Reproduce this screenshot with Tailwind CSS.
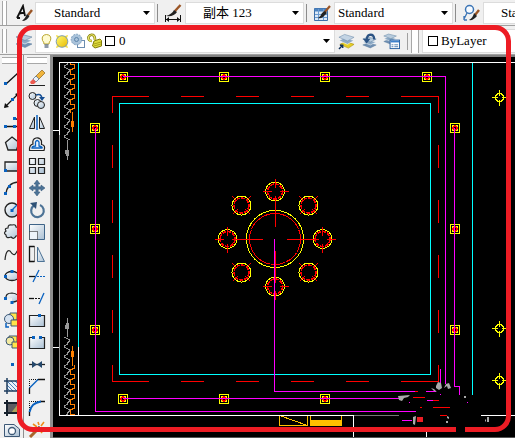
<!DOCTYPE html>
<html lang="zh-CN">
<head>
    <meta charset="UTF-8">
    <meta name="viewport" content="width=device-width, initial-scale=1.0">
    <title>CAD</title>
    <script src="https://cdn.jsdelivr.net/npm/@tailwindcss/browser@4"></script>
</head>
<body class="relative flex h-screen flex-col overflow-hidden bg-[#f0f0f0] font-['Liberation_Serif','Noto_Sans_CJK_SC',serif] text-[13px] text-black">

    <!-- shared gradients and glyphs -->
    <svg class="absolute h-0 w-0" aria-hidden="true">
        <defs>
            <linearGradient id="steel" x1="0" y1="0" x2="1" y2="1">
                <stop offset="0" stop-color="#fff"/><stop offset="1" stop-color="#a9bfd3"/>
            </linearGradient>
            <linearGradient id="glow" x1="0" y1="0" x2="1" y2="1">
                <stop offset="0" stop-color="#fffb70"/><stop offset="1" stop-color="#e8b800"/>
            </linearGradient>
            <symbol id="brush" viewBox="0 0 18 18">
                <path d="M17 2 L11 9" stroke="#9a5526" stroke-width="2.2"/>
                <path d="M12 7 L14 9 L10 13 Q7 15 5 14 Q8 12 9 9 Z" fill="#222"/>
            </symbol>
            <symbol id="sheets" viewBox="0 0 18 18">
                <path d="M1 12 L7 9.500 L17 12 L10 15.500 Z" fill="#6f8fb2" stroke="#56789b" stroke-width=".5"/>
                <path d="M1 8.500 L7 6 L17 8.500 L10 12 Z" fill="#8ba8c4" stroke="#fff" stroke-width=".6"/>
                <path d="M1 5 L7 2.500 L17 5 L10 8.500 Z" fill="#b7cbdd" stroke="#5f81a0" stroke-width=".6"/>
            </symbol>
        </defs>
    </svg>

    <!-- styles toolbar -->
    <header class="flex h-[26px] shrink-0 items-center border-b border-[#a0a0a0] pl-0.5">
        <span class="h-6 w-[5px] shrink-0 border-x border-[#a8a8a8] bg-white"></span>
        <button class="ml-1.5 flex w-[22px] shrink-0 justify-center" aria-label="Text style">
            <svg class="size-[18px]" viewBox="0 0 18 18" fill="none">
                <path d="M2 14 L8 2 L10 12 M4 9.500 L10 8.500 M2 14 H5" stroke="#111" stroke-width="1.800"/>
                <path d="M17 6 L13 11" stroke="#9a5526" stroke-width="2.400"/>
                <path d="M12 10 L14.500 12 Q12 17 7 17 Q10 15 12 10 Z" fill="#222"/>
            </svg>
        </button>
        <label class="flex h-[22px] w-[120px] shrink-0 items-center border border-[#dcdcdc] bg-white pr-1 pl-[18px]">
            <select class="min-w-0 flex-1 appearance-none bg-transparent outline-none" aria-label="Text style name"><option>Standard</option></select>
            <svg class="h-1 w-[7px]" viewBox="0 0 7 4"><path d="M0 0 H7 L3.500 4 Z"/></svg>
        </label>
        <span class="mx-0.5 h-[18px] w-px shrink-0 bg-[#8c8c8c]"></span>
        <button class="flex w-[25px] shrink-0 justify-center" aria-label="Dimension style">
            <svg class="size-[18px]" viewBox="0 0 18 18" fill="none">
                <path d="M1.500 11 V18 M16.500 11 V18 M2 15.500 H16" stroke="#111"/>
                <path d="M2 15.500 L5 13 V18 Z M16 15.500 L13 13 V18 Z" fill="#111"/>
                <path d="M16.500 1 L11 7" stroke="#9a5526" stroke-width="2.400"/>
                <path d="M10 6 L13 8 Q10 13 2 12 Q8 10 10 6 Z" fill="#222"/>
            </svg>
        </button>
        <label class="flex h-[22px] w-[119px] shrink-0 items-center border border-[#dcdcdc] bg-white pr-1 pl-[17px]">
            <select class="min-w-0 flex-1 appearance-none bg-transparent outline-none" aria-label="Dimension style name"><option>副本 123</option></select>
            <svg class="h-1 w-[7px]" viewBox="0 0 7 4"><path d="M0 0 H7 L3.500 4 Z"/></svg>
        </label>
        <span class="mx-0.5 h-[18px] w-px shrink-0 bg-[#8c8c8c]"></span>
        <button class="flex w-[25px] shrink-0 justify-center" aria-label="Table style">
            <svg class="size-[18px]" viewBox="0 0 18 18" fill="none">
                <path d="M1.500 4.500 H14.500 V16.500 H1.500 Z" fill="#dce9f7" stroke="#3d6ea8"/>
                <path d="M1.500 4.500 H14.500 V7.500 H1.500 Z" fill="#4b83c0"/>
                <path d="M2 10.500 H14 M2 13.500 H14 M5.500 5 V16 M10.500 5 V16" stroke="#6b9bd0"/>
                <use href="#brush" width="18" height="18"/>
            </svg>
        </button>
        <label class="flex h-[22px] w-[119px] shrink-0 items-center border border-[#dcdcdc] bg-white pr-1 pl-[3px]">
            <select class="min-w-0 flex-1 appearance-none bg-transparent outline-none" aria-label="Table style name"><option>Standard</option></select>
            <svg class="h-1 w-[7px]" viewBox="0 0 7 4"><path d="M0 0 H7 L3.500 4 Z"/></svg>
        </label>
        <span class="mx-0.5 h-[18px] w-px shrink-0 bg-[#8c8c8c]"></span>
        <button class="flex w-[25px] shrink-0 justify-center" aria-label="Multileader style">
            <svg class="size-[18px]" viewBox="0 0 18 18" fill="none">
                <circle cx="7.500" cy="5.500" r="4" fill="#f5faff" stroke="#3b74b5" stroke-width="1.500"/>
                <path d="M5 9 L2 15 M2 16 V12 M2 16 H5" stroke="#3b74b5" stroke-width="1.300"/>
                <path d="M17 6 L13 11" stroke="#9a5526" stroke-width="2.400"/>
                <path d="M12 9 L15 12 Q11 17 7 16 Q11 14 12 9 Z" fill="#222"/>
            </svg>
        </button>
        <label class="flex h-[22px] min-w-0 flex-1 items-center overflow-hidden border border-r-0 border-[#dcdcdc] bg-white pl-[17px]">
            <select class="shrink-0 appearance-none bg-transparent outline-none" aria-label="Multileader style name"><option>Standard</option></select>
        </label>
    </header>

    <!-- layers toolbar -->
    <div class="flex h-[29px] shrink-0 items-center border-b border-[#a0a0a0] pt-0.5 pl-0.5">
        <span class="h-6 w-[5px] shrink-0 border-x border-[#a8a8a8] bg-white"></span>
        <button class="ml-1.5 flex w-[22px] shrink-0 justify-center" aria-label="Layer properties">
            <svg class="size-[18px]" viewBox="0 0 18 18"><use href="#sheets"/></svg>
        </button>
        <div class="flex h-6 min-w-0 flex-1 items-center border border-[#dcdcdc] bg-white pr-1 pl-[3px]">
            <svg class="h-4 w-[15px] shrink-0" viewBox="0 0 15 16" fill="none">
                <path d="M5 11 Q5 9 3.500 7.500 Q2 2 7.500 1.500 Q13 2 11.500 7.500 Q10 9 10 11 Z" fill="#fffbd0" stroke="#b9a52e"/>
                <path d="M5.500 12 H9.500 M5.500 14 H9.500" stroke="#68788c" stroke-width="1.500"/>
            </svg>
            <svg class="h-4 w-4 shrink-0" viewBox="0 0 16 16">
                <path d="M2 2 L5 3 H11 L14 2 L13 5 V12 L14 15 L11 14 H5 L2 15 L3 12 V5 Z" fill="#f4dc3a"/>
                <circle cx="8" cy="8.500" r="5.800" fill="url(#glow)" stroke="#7d9ab0"/>
            </svg>
            <svg class="h-4 w-[17px] shrink-0" viewBox="0 0 17 16" fill="none">
                <rect x="7.500" y="7.500" width="7" height="7" fill="#fff" stroke="#6c8db0"/>
                <circle cx="6.500" cy="6.500" r="5.300" fill="#a9c2da" stroke="#7b9dbd" stroke-dasharray="2 1"/>
                <circle cx="6.500" cy="6.500" r="2" stroke="#5e85ab"/>
            </svg>
            <svg class="h-4 w-4 shrink-0" viewBox="0 0 16 16" fill="none">
                <path d="M5 8 Q1 8 1.500 4 Q3 1 6 2 Q8 3 8 7" stroke="#827c0b" stroke-width="2.600"/>
                <path d="M5 8 Q1 8 1.500 4 Q3 1 6 2 Q8 3 8 7" stroke="#ece868" stroke-width="1.200"/>
                <path d="M7 8 L13 6 L14.500 7.500 V13 L8 15 L5.500 13 Z" fill="#dedb3d" stroke="#827c0b"/>
                <path d="M7 11 L14 9 M7 13 L14 11" stroke="#aaa31a"/>
            </svg>
            <span class="ml-0.5 size-2.5 shrink-0 border border-black bg-white"></span>
            <select class="ml-1 min-w-0 flex-1 appearance-none bg-transparent outline-none" aria-label="Current layer"><option>0</option></select>
            <svg class="h-1 w-[7px] shrink-0" viewBox="0 0 7 4"><path d="M0 0 H7 L3.500 4 Z"/></svg>
        </div>
        <div class="flex w-[73px] shrink-0 items-center justify-between border-r border-[#a0a0a0] pr-[7px] pl-[3px]">
            <button aria-label="Make object's layer current">
                <svg class="size-[17px]" viewBox="0 0 18 18">
                    <path d="M2 12 L8 9 L17 12 L11 16 Z" fill="#e6cf25" stroke="#a48b0d" stroke-width=".6"/>
                    <path d="M1 8 L7 5 L17 8 L10 12 Z" fill="#8faac4" stroke="#fff" stroke-width=".6"/>
                    <path d="M1 4.500 L7 1.500 L17 4.500 L10 8.500 Z" fill="#c3d4e4" stroke="#6f8eab" stroke-width=".6"/>
                    <path d="M1 17 L5 13 M2 13 H5 V16" stroke="#12335c" stroke-width="1.500" fill="none"/>
                </svg>
            </button>
            <button aria-label="Layer previous">
                <svg class="size-[17px]" viewBox="0 0 18 18" fill="none">
                    <use href="#sheets" y="2" width="18" height="16"/>
                    <path d="M14 7 Q14 1 9 2 Q6 3 6 8" stroke="#2b5384" stroke-width="2.400"/>
                    <path d="M2 6 L10 6 L6 11 Z" fill="#2b5384"/>
                </svg>
            </button>
            <button aria-label="Layer states manager">
                <svg class="size-[17px]" viewBox="0 0 18 18">
                    <use href="#sheets" y="-1" width="15" height="15"/>
                    <rect x="7.500" y="7.500" width="10" height="9" fill="#fff" stroke="#2760a0"/>
                    <path d="M8 8 H17 V10 H8 Z" fill="#3f82cc"/>
                    <path d="M9 12.500 H11 M12 12.500 H16 M9 14.500 H11 M12 14.500 H16" stroke="#527fae"/>
                </svg>
            </button>
        </div>
        <span class="mx-[3px] h-6 w-2 shrink-0 border-x border-[#a8a8a8] bg-white"></span>
        <label class="flex h-6 w-[93px] shrink-0 items-center border border-r-0 border-[#dcdcdc] bg-white pl-[5px]">
            <span class="size-2.5 shrink-0 border border-black bg-white"></span>
            <select class="ml-[3px] min-w-0 flex-1 appearance-none bg-transparent outline-none" aria-label="Color"><option>ByLayer</option></select>
        </label>
    </div>

    <main class="flex min-h-0 flex-1">
        <!-- draw toolbar -->
        <nav class="flex w-6 shrink-0 flex-col items-center overflow-hidden border-r border-[#8f8f8f] pt-0.5" aria-label="Draw">
            <span class="mb-[3px] h-[7px] w-5 shrink-0 border-y border-[#a8a8a8] bg-white"></span>
            <button class="flex h-[22px] shrink-0 items-center" aria-label="Line">
                <svg class="size-[18px]" viewBox="0 0 18 18"><path d="M3 15 L15 4" stroke="#111" stroke-width="1.300"/><path d="M1 13 H4 V16 H1 Z M14 2 H17 V5 H14 Z" fill="#0a62c0"/></svg>
            </button>
            <button class="flex h-[22px] shrink-0 items-center" aria-label="Construction line">
                <svg class="size-[18px]" viewBox="0 0 18 18"><path d="M2 16 L16 2" stroke="#111" stroke-width="1.300"/><path d="M1 17 L2 12 L6 16 Z M17 1 L12 3 L15 6 Z" fill="#111"/><path d="M8 7 H11 V10 H8 Z" fill="#0a62c0"/></svg>
            </button>
            <button class="flex h-[22px] shrink-0 items-center" aria-label="Polyline">
                <svg class="size-[18px]" viewBox="0 0 18 18" fill="none"><path d="M2 13.500 H16 M12 6 H13 Q17 6 17 10" stroke="#111" stroke-width="1.300"/><path d="M1 12 H4 V15 H1 Z M10 12 H13 V15 H10 Z M10 4 H13 V7 H10 Z" fill="#0a62c0"/></svg>
            </button>
            <button class="flex h-[22px] shrink-0 items-center" aria-label="Polygon">
                <svg class="size-[18px]" viewBox="0 0 18 18"><path d="M9 2 L16 7.500 L13.500 15 H5 L2.500 7.500 Z" fill="url(#steel)" stroke="#222" stroke-width="1.300"/></svg>
            </button>
            <button class="flex h-[22px] shrink-0 items-center" aria-label="Rectangle">
                <svg class="size-[18px]" viewBox="0 0 18 18"><path d="M2 5 H17 V14 H2 Z" fill="url(#steel)" stroke="#222" stroke-width="1.300"/><path d="M1 12 H4 V15 H1 Z M14 3 H17 V6 H14 Z" fill="#0a62c0"/></svg>
            </button>
            <button class="flex h-[22px] shrink-0 items-center" aria-label="Arc">
                <svg class="size-[18px]" viewBox="0 0 18 18" fill="none"><path d="M3 15 Q4 4 15 3" stroke="#222" stroke-width="1.300"/><path d="M1 13 H4 V16 H1 Z M5 6 H8 V9 H5 Z M14 2 H17 V5 H14 Z" fill="#0a62c0"/></svg>
            </button>
            <button class="flex h-[22px] shrink-0 items-center" aria-label="Circle">
                <svg class="size-[18px]" viewBox="0 0 18 18"><circle cx="9" cy="9" r="7" fill="url(#steel)" stroke="#222" stroke-width="1.400"/><path d="M9 9 L14 4" stroke="#0a62c0" stroke-width="1.300"/><path d="M7.500 8 H10.500 V11 H7.500 Z" fill="#0a62c0"/></svg>
            </button>
            <button class="flex h-[22px] shrink-0 items-center" aria-label="Revision cloud">
                <svg class="size-[18px]" viewBox="0 0 18 18"><path d="M5 5 Q5 1 9 2 Q13 1 13 4 Q18 5 16 9 Q17 13 13 13 Q11 17 8 14 Q3 16 3 12 Q0 10 3 8 Q1 5 5 5 Z" fill="url(#steel)" stroke="#222" stroke-width="1.200"/></svg>
            </button>
            <button class="flex h-[22px] shrink-0 items-center" aria-label="Spline">
                <svg class="size-[18px]" viewBox="0 0 18 18" fill="none"><path d="M2 15 Q3 4 7 6 Q11 12 13 8 Q14 5 17 4" stroke="#222" stroke-width="1.200"/></svg>
            </button>
            <button class="flex h-[22px] shrink-0 items-center" aria-label="Ellipse">
                <svg class="size-[18px]" viewBox="0 0 18 18"><ellipse cx="9" cy="9" rx="7" ry="4.500" fill="url(#steel)" stroke="#222" stroke-width="1.300"/><path d="M1 8 H4 V11 H1 Z M7.500 3 H10.500 V6 H7.500 Z M14 8 H17 V11 H14 Z" fill="#0a62c0"/></svg>
            </button>
            <button class="flex h-[22px] shrink-0 items-center" aria-label="Ellipse arc">
                <svg class="size-[18px]" viewBox="0 0 18 18"><path d="M3 10 Q2 4 9 4 Q16 5 16 9 Q15 13 9 13 V9 Z" fill="url(#steel)"/><path d="M3 10 Q2 4 9 4 Q16 5 16 9 Q15 13 9 13" fill="none" stroke="#222" stroke-width="1.200"/><path d="M1 8 H4 V11 H1 Z M7.500 12 H10.500 V15 H7.500 Z" fill="#0a62c0"/></svg>
            </button>
            <button class="flex h-[22px] shrink-0 items-center" aria-label="Insert block">
                <svg class="size-[18px]" viewBox="0 0 18 18"><path d="M7 2 H14 V9 H7 Z" fill="#ffe34a" stroke="#3c5876"/><circle cx="6" cy="8" r="4.500" fill="#d5e2f0" stroke="#3c5876"/><path d="M8 9 H15 V15 H8 Z" fill="#ffe34a" stroke="#3c5876"/><path d="M3 12 V16 H6" fill="none" stroke="#0a62c0" stroke-width="1.500"/><path d="M17 14 V17 H14 Z"/></svg>
            </button>
            <button class="flex h-[22px] shrink-0 items-center" aria-label="Make block">
                <svg class="size-[18px]" viewBox="0 0 18 18"><path d="M6 3 H14 V10 H6 Z" fill="#ffe34a" stroke="#3c5876"/><circle cx="7" cy="8" r="4" fill="#f3eaa0" stroke="#3c5876"/><path d="M9 9 H16 V15 H9 Z" fill="#ffe34a" stroke="#3c5876"/></svg>
            </button>
            <button class="flex h-[22px] shrink-0 items-center" aria-label="Point">
                <svg class="size-[18px]" viewBox="0 0 18 18"><path d="M8 8 H11 V11 H8 Z" fill="#0a62c0"/></svg>
            </button>
            <button class="flex h-[22px] shrink-0 items-center" aria-label="Hatch">
                <svg class="size-[18px]" viewBox="0 0 18 18"><path d="M4 4 H15 V14 H4 Z" fill="#e9f1fa"/><path d="M4 4 L14 14 M8 4 L15 11 M12 4 L15 7 M4 8 L10 14 M4 11 L7 14" stroke="#4b80b8"/><path d="M4 1 V17 M15 1 V17 M1 4 H18 M1 14 H18" stroke="#1e3c5e" stroke-width="1.500"/></svg>
            </button>
            <button class="flex h-[22px] shrink-0 items-center" aria-label="Gradient">
                <svg class="size-[18px]" viewBox="0 0 18 18"><path d="M4 4 H15 V14 H4 Z" fill="#5d5d62"/><path d="M8 14 L15 5 V14 Z" fill="#aaa35c"/><path d="M4 1 V17 M15 1 V17 M1 4 H18 M1 14 H18" stroke="#16202c" stroke-width="2"/></svg>
            </button>
            <button class="flex h-[22px] shrink-0 items-center" aria-label="Region">
                <svg class="size-[18px]" viewBox="0 0 18 18"><path d="M1.500 3.500 H11 L16.500 8 V15.500 H1.500 Z" fill="url(#steel)" stroke="#3c5876"/><circle cx="9" cy="10" r="3.500" fill="#fff" stroke="#3c5876" stroke-width="1.300"/></svg>
            </button>
        </nav>

        <!-- modify toolbar -->
        <nav class="flex w-[29px] shrink-0 flex-col items-center overflow-hidden border-r-3 border-[#8f8f8f] pt-0.5" aria-label="Modify">
            <span class="mb-[3px] h-[7px] w-5 shrink-0 border-y border-[#a8a8a8] bg-white"></span>
            <button class="flex h-[22px] shrink-0 items-center" aria-label="Erase">
                <svg class="size-[18px]" viewBox="0 0 18 18"><path d="M1 16.500 H17" stroke="#222"/><path d="M7 8 L14 1 L17 4 L10 11 Z" fill="#f0b43c" stroke="#8a6420" stroke-width=".7"/><path d="M5 10 L8 7 L11 10 L8 13 Z" fill="#e9f1fa" stroke="#4a6888" stroke-width=".7"/><path d="M2 13 L5 10 L8 13 L6 15 H3 Z" fill="#ed5a50"/></svg>
            </button>
            <button class="flex h-[22px] shrink-0 items-center" aria-label="Copy">
                <svg class="size-[18px]" viewBox="0 0 18 18" fill="none"><circle cx="4.500" cy="5" r="3.500" fill="url(#steel)" stroke="#222"/><circle cx="9.500" cy="12" r="3.500" fill="url(#steel)" stroke="#222"/><circle cx="13" cy="14" r="3.500" fill="url(#steel)" stroke="#222"/><path d="M8 4 Q13 2 14 7" stroke="#174f94" stroke-width="1.500"/><path d="M11 6 H17 L14 10 Z" fill="#174f94"/></svg>
            </button>
            <button class="flex h-[22px] shrink-0 items-center" aria-label="Mirror">
                <svg class="size-[18px]" viewBox="0 0 18 18"><path d="M6.500 4 V15.500 H1.500 Z" fill="url(#steel)" stroke="#222"/><path d="M11.500 4 V15.500 H16.500 Z" fill="url(#steel)" stroke="#222"/><path d="M9 2 V17" stroke="#0a62c0" stroke-width="1.500"/></svg>
            </button>
            <button class="flex h-[22px] shrink-0 items-center" aria-label="Offset">
                <svg class="size-[18px]" viewBox="0 0 18 18" fill="none"><path d="M2 15.500 H16 Q18 10 13.500 9.500 V6 Q12 2 8 3 Q4 4 5 9 Q1 10 1.500 15.500 Z" stroke="#222" stroke-width="1.200"/><path d="M4 13 H14 Q15 12 11 11 V7 Q9 4 7.500 7 V11 Q4 11 4 13 Z" fill="#e9f3ff" stroke="#0a62c0" stroke-width="1.300"/></svg>
            </button>
            <button class="flex h-[22px] shrink-0 items-center" aria-label="Array">
                <svg class="size-[18px]" viewBox="0 0 18 18"><path d="M1.500 1.500 H7.500 V7.500 H1.500 Z M10.500 1.500 H16.500 V7.500 H10.500 Z M1.500 10.500 H7.500 V16.500 H1.500 Z M10.500 10.500 H16.500 V16.500 H10.500 Z" fill="url(#steel)" stroke="#222" stroke-width="1.200"/></svg>
            </button>
            <button class="flex h-[22px] shrink-0 items-center" aria-label="Move">
                <svg class="size-[18px]" viewBox="0 0 18 18"><path d="M9 1 L12 5 H10.200 V7.800 H13 V6 L17 9 L13 12 V10.200 H10.200 V13 H12 L9 17 L6 13 H7.800 V10.200 H5 V12 L1 9 L5 6 V7.800 H7.800 V5 H6 Z" fill="#4d7396" stroke="#2f5276" stroke-width=".5"/></svg>
            </button>
            <button class="flex h-[22px] shrink-0 items-center" aria-label="Rotate">
                <svg class="size-[18px]" viewBox="0 0 18 18" fill="none"><path d="M6 4.500 A6.300 6.300 0 1 0 12 4" stroke="#4d7396" stroke-width="2.200"/><path d="M2 2 L9 1 L8 8 Z" fill="#2f5276"/></svg>
            </button>
            <button class="flex h-[22px] shrink-0 items-center" aria-label="Scale">
                <svg class="size-[18px]" viewBox="0 0 18 18"><path d="M1.500 1.500 H16.500 V16.500 H1.500 Z" fill="url(#steel)" stroke="#3f6488"/><path d="M1.500 8.500 H9.500 V16.500 H1.500 Z" fill="#eef4fa" stroke="#111" stroke-dasharray="1 1"/></svg>
            </button>
            <button class="flex h-[22px] shrink-0 items-center" aria-label="Stretch">
                <svg class="size-[18px]" viewBox="0 0 18 18" fill="none"><path d="M6.500 1.500 H1.500 V16.500 H6.500" stroke="#111" stroke-width="1.300"/><path d="M6.500 1.500 V16.500" stroke="#111" stroke-dasharray="1 1"/><path d="M9.500 2 L16.500 16.500 H9.500 Z" fill="url(#steel)" stroke="#4d7396"/></svg>
            </button>
            <button class="flex h-[22px] shrink-0 items-center" aria-label="Trim">
                <svg class="size-[18px]" viewBox="0 0 18 18"><path d="M1 9.500 H7" stroke="#111" stroke-width="1.300"/><path d="M9 9.500 H17" stroke="#0a62c0" stroke-dasharray="2 1"/><path d="M5 15 L11 3" stroke="#0a62c0" stroke-width="1.300"/></svg>
            </button>
            <button class="flex h-[22px] shrink-0 items-center" aria-label="Extend">
                <svg class="size-[18px]" viewBox="0 0 18 18"><path d="M1 9.500 H6" stroke="#111" stroke-width="1.300"/><path d="M7 9.500 H13" stroke="#111" stroke-dasharray="2 1"/><path d="M11 15 L16 4" stroke="#0a62c0" stroke-width="1.300"/></svg>
            </button>
            <button class="flex h-[22px] shrink-0 items-center" aria-label="Break at point">
                <svg class="size-[18px]" viewBox="0 0 18 18"><path d="M1.500 4.500 H16.500 V15.500 H1.500 Z" fill="url(#steel)" stroke="#222" stroke-width="1.200"/><path d="M10 3 H13 V6 H10 Z" fill="#0a62c0"/></svg>
            </button>
            <button class="flex h-[22px] shrink-0 items-center" aria-label="Break">
                <svg class="size-[18px]" viewBox="0 0 18 18"><path d="M1.500 4.500 H16.500 V15.500 H1.500 Z" fill="url(#steel)"/><path d="M5 4.500 H1.500 V15.500 H16.500 V4.500 H13" fill="none" stroke="#222" stroke-width="1.200"/><path d="M4 3 H7 V6 H4 Z M11 3 H14 V6 H11 Z" fill="#0a62c0"/></svg>
            </button>
            <button class="flex h-[22px] shrink-0 items-center" aria-label="Join">
                <svg class="size-[18px]" viewBox="0 0 18 18"><path d="M1 9.500 H17" stroke="#222" stroke-width="1.300"/><path d="M4 6 L9 9.500 L4 13 Z M14 6 L9 9.500 L14 13 Z" fill="#24476b"/></svg>
            </button>
            <button class="flex h-[22px] shrink-0 items-center" aria-label="Chamfer">
                <svg class="size-[18px]" viewBox="0 0 18 18" fill="none"><path d="M1.500 11 V2.500 H11" stroke="#111" stroke-dasharray="1 1"/><path d="M1.500 17 V11 M10 2.500 H17" stroke="#111" stroke-width="1.300"/><path d="M1.500 11 L10 2.500" stroke="#0a62c0" stroke-width="1.500"/></svg>
            </button>
            <button class="flex h-[22px] shrink-0 items-center" aria-label="Fillet">
                <svg class="size-[18px]" viewBox="0 0 18 18" fill="none"><path d="M1.500 11 V2.500 H11" stroke="#111" stroke-dasharray="1 1"/><path d="M1.500 17 V13 M12 2.500 H17" stroke="#111" stroke-width="1.300"/><path d="M1.500 13 Q3 4 13 2.500" stroke="#0a62c0" stroke-width="2"/></svg>
            </button>
            <button class="flex h-[22px] shrink-0 items-center" aria-label="Explode">
                <svg class="size-[18px]" viewBox="0 0 18 18"><path d="M2 16 L10 8" stroke="#a9652b" stroke-width="3"/><path d="M9 9 L12 6" stroke="#222" stroke-width="3"/><path d="M10 1 L11 4 M16 1 L13 5 M17 8 L14 7 M14 12 L12 9 M5 3 L9 6" stroke="#f08c1c" stroke-width="1.600"/></svg>
            </button>
        </nav>

        <!-- model space -->
        <section class="min-w-0 flex-1 border-t-2 border-[#808080] bg-black" aria-label="Model space">
            <svg class="block h-full w-full" viewBox="53 57 462 381" preserveAspectRatio="xMinYMin meet" fill="none" shape-rendering="crispEdges">
                <defs>
                    <g id="lamp">
                        <path d="M0 0 H10 V10 H0 Z" fill="#ff0"/>
                        <path d="M1 1 H9 V9 H1 Z" fill="#000"/>
                        <path d="M2 2 H4 V3 H3 V4 H2 Z M6 2 H8 V4 H7 V3 H6 Z M8 8 H6 V7 H7 V6 H8 Z M2 8 V6 H3 V7 H4 V8 Z" fill="#ff0"/>
                        <path d="M4 2 H6 V3 H7 V4 H8 V6 H7 V7 H6 V8 H4 V7 H3 V6 H2 V4 H3 V3 H4 Z" fill="#f00"/>
                        <path d="M4 4 H6 V6 H4 Z" fill="#000"/>
                    </g>
                    <g id="target" stroke="#ff0">
                        <circle r="4" stroke-width="1.500"/>
                        <path d="M-8 0 H-2 M2 0 H7 M0 -8 V-2 M0 2 V8"/>
                    </g>
                    <g id="hole">
                        <circle r="9.500" stroke="#ff0"/>
                        <circle r="7.500" stroke="#f00" stroke-width="1.500" stroke-dasharray="4 1"/>
                    </g>
                    <path id="plus" d="M-13 0 H-4 M4 0 H13 M0 -13 V-4 M0 4 V13" stroke="#f00"/>
                    <path id="cross" d="M-9 -9 L-4 -4 M9 9 L4 4 M-9 9 L-4 4 M9 -9 L4 -4" stroke="#f00"/>
                    <pattern id="springGray" x="64" y="63" width="7" height="10" patternUnits="userSpaceOnUse">
                        <path d="M3.500 0 V1 L.500 3 V4 L5.500 7 V8 L3.500 10" stroke="#999"/>
                    </pattern>
                    <pattern id="springOrange" x="69" y="63" width="7" height="10" patternUnits="userSpaceOnUse">
                        <path d="M1.500 0 V1 L5.500 2 V5 L1.500 7 V10" stroke="#ff7f00"/>
                    </pattern>
                </defs>

                <!-- sheet frame -->
                <path d="M59.500 415.500 V62.500 H515" stroke="#fff"/>
                <path d="M59.500 135 V400" stroke="#999"/>
                <path d="M53 130.500 H59 M53 347.500 H59 M59 415.500 H353.500 V437 M78.500 347 V415 M481 415.500 H515 M426.500 432 V437" stroke="#fff"/>
                <path d="M354 415.500 H399" stroke="#777"/>
                <path d="M53 437.500 H515" stroke="#555"/>
                <path d="M78.500 63 V347 M472.500 63 V395 M119.500 103.500 H430.500 V374.500 H119.500 Z" stroke="#0ff"/>

                <!-- springs -->
                <path d="M64 63 H71 V140 H64 Z M64 337 H71 V415 H64 Z" fill="url(#springGray)"/>
                <path d="M69 63 H76 V113 H69 Z M69 365 H76 V415 H69 Z" fill="url(#springOrange)"/>
                <path d="M67.500 140 V160 M67.500 318 V337" stroke="#999"/>
                <path d="M65 150 H69 V156 H66 V154 H65 Z M65 329 H69 V323 H66 V325 H65 Z" fill="#999"/>
                <path d="M72.500 112 V132 M72.500 346 V366" stroke="#ff7f00"/>
                <path d="M71 121 H74 V127 H71 Z M71 351 H74 V357 H71 Z" fill="#ff7f00"/>

                <!-- hidden line rectangle -->
                <path d="M112.500 113 V96.500 H149 M401 96.500 H438.500 V113 M112.500 365 V381.500 H149 M401 381.500 H438.500 V365" stroke="#f00"/>
                <path d="M112.500 145 V365 M438.500 145 V365" stroke="#f00" stroke-dasharray="23 32"/>
                <path d="M181 96.500 H400 M181 381.500 H400" stroke="#f00" stroke-dasharray="23 32"/>

                <!-- lamps and wiring -->
                <use href="#lamp" x="118" y="72"/>
                <use href="#lamp" x="219" y="72"/>
                <use href="#lamp" x="320" y="72"/>
                <use href="#lamp" x="422" y="72"/>
                <use href="#lamp" x="118" y="394"/>
                <use href="#lamp" x="219" y="394"/>
                <use href="#lamp" x="320" y="394"/>
                <use href="#lamp" x="90" y="123"/>
                <use href="#lamp" x="90" y="224"/>
                <use href="#lamp" x="90" y="325"/>
                <use href="#lamp" x="450" y="123"/>
                <use href="#lamp" x="450" y="224"/>
                <use href="#lamp" x="450" y="325"/>
                <path d="M123 76.500 H445.500 V384 M95.500 128 V411.500 H416 M123 398.500 H400 M454.500 128 V386.500 H459.500 V395" stroke="#f0f"/>
                <path d="M440.500 369 V384 M426 391.500 H436 M427 400.500 H433 M402 420.500 H412" stroke="#f0f"/>

                <!-- flange -->
                <circle cx="275" cy="239" r="28.500" stroke="#ff0"/>
                <circle cx="275" cy="239" r="25.500" stroke="#f00" stroke-dasharray="14 1"/>
                <path d="M275.500 200 V227 M275.500 251 V278 M236 239.500 H263 M287 239.500 H314" stroke="#f00"/>
                <use href="#hole" x="275" y="191.500"/><use href="#plus" x="275.500" y="191.500"/>
                <use href="#hole" x="322.500" y="239"/><use href="#plus" x="322.500" y="239.500"/>
                <use href="#hole" x="275" y="286.500"/><use href="#plus" x="275.500" y="286.500"/>
                <use href="#hole" x="227.500" y="239"/><use href="#plus" x="227.500" y="239.500"/>
                <use href="#hole" x="308.500" y="205.500"/><use href="#cross" x="308.500" y="205.500"/>
                <use href="#hole" x="308.500" y="272.500"/><use href="#cross" x="308.500" y="272.500"/>
                <use href="#hole" x="241.500" y="272.500"/><use href="#cross" x="241.500" y="272.500"/>
                <use href="#hole" x="241.500" y="205.500"/><use href="#cross" x="241.500" y="205.500"/>
                <path d="M274.500 239 V391.500 H415" stroke="#f0f"/>

                <use href="#target" x="499.500" y="97.500"/>
                <use href="#target" x="499.500" y="328.500"/>
                <use href="#target" x="499.500" y="380.500"/>

                <!-- title block -->
                <path d="M279.500 416 V425.500 H307.500 V416 M281 416 L306 425 M310.500 416 V425.500 H341.500 V416" stroke="#ffc000"/>
                <path d="M310 420 H342 V426 H310 Z" fill="#ffc000"/>

                <!-- scattered marks -->
                <path d="M415 391.500 H418 M413 397.500 H425 M433 400.500 H439 M420 407.500 H422 M433 407.500 H450 M440 415.500 H447" stroke="#f00"/>
                <path d="M417 417 H423 V422 H417 Z" fill="#ed1c24"/>
                <g fill="#aaa" shape-rendering="auto">
                    <path d="M436 386 L438 382 L441 383 L442 388 L439 390 L436 388 Z M444 388 L446 384 L449 383 L451 388 L448 389 L447 386 Z M431 388 L434 389 L437 392 L434 391 Z"/>
                    <path d="M398 396 L410 395 L408 397 L404 398 L402 401 L399 400 Z M413 417 L416 416 L415 425 L413 424 Z M464 396 H466 V398 H464 Z M485 420 L486 419 V421 L485 422 Z M487 417 H489 V422 H487 Z M447 416 L449 417 V419 L447 418 Z M446 421 H448 V423 H446 Z"/>
                </g>
                <path d="M409 402 H410 V403 H409 Z M467 402 H468 V403 H467 Z M440 394 H441 V395 H440 Z" fill="#f0f"/>
            </svg>
        </section>
    </main>

    <!-- highlight frame -->
    <div class="pointer-events-none absolute top-[25px] right-1 bottom-1.5 left-[17px] rounded-2xl border-5 border-[#ed1c24]">
        <span class="absolute right-[41px] -bottom-[5px] h-[5px] w-[9px] bg-black"></span>
    </div>
</body>
</html>
